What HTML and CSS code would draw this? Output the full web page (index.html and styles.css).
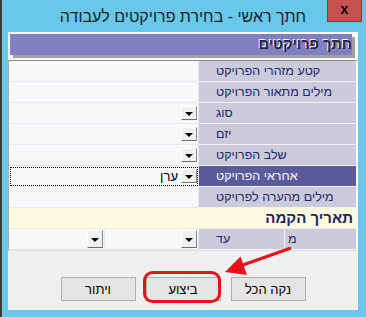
FILE: index.html
```html
<!DOCTYPE html>
<html lang="he">
<head>
    <meta charset="utf-8">
    <title>חתך ראשי - בחירת פרויקטים לעבודה</title>
    <link rel="stylesheet" href="styles.css">
</head>
<body>
    <div class="window">
        <div class="titlebar">
            <span></span>
            <span class="title">חתך ראשי - בחירת פרויקטים לעבודה</span>
            <span class="close-btn">x</span>
        </div>

        <div class="client">
            <div class="header-wrap">
                <div class="header-bar">חתך פרויקטים</div>
            </div>

            <div class="grid">
                <div class="value"></div>
                <div class="label">קטע מזהרי הפרויקט</div>

                <div class="value"></div>
                <div class="label">מילים מתאור הפרויקט</div>

                <div class="value"><span class="drop"></span></div>
                <div class="label">סוג</div>

                <div class="value"><span class="drop"></span></div>
                <div class="label">יזם</div>

                <div class="value"><span class="drop"></span></div>
                <div class="label">שלב הפרויקט</div>

                <div class="value focused"><span class="val-text">ערן</span><span class="drop"></span></div>
                <div class="label selected">אחראי הפרויקט</div>

                <div class="value"></div>
                <div class="label">מילים מהערה לפרויקט</div>

                <div class="section">תאריך הקמה</div>

                <div class="value date"><span class="drop tall"></span></div>
                <div class="value date"><span class="drop tall"></span></div>
                <div class="label date">עד</div>
                <div class="label date from">מ</div>
            </div>

            <div class="buttons">
                <button>ויתור</button>
                <button>ביצוע</button>
                <button>נקה הכל</button>
            </div>
        </div>

        <!-- red annotation drawn over the dialog -->
        <svg class="annotation" width="366" height="317" viewBox="0 0 366 317">
            <rect x="144.5" y="272.5" width="75" height="29" rx="8" fill="none" stroke="#e8121b" stroke-width="3"/>
            <line x1="291" y1="248" x2="240" y2="266" stroke="#e8121b" stroke-width="3"/>
            <polygon points="225,272 240.5,256.5 247,275" fill="#e8121b"/>
        </svg>
    </div>
</body>
</html>
```

FILE: styles.css
```css
body {
    margin: 0;
    font-family: "Liberation Sans", "DejaVu Sans", sans-serif;
}

.window {
    position: relative;
    width: 366px;
    height: 317px;
    background-color: #67c8e9;
    box-shadow: inset 2px 0 0 #3b3b3b;
    overflow: hidden;
}

.titlebar {
    display: grid;
    grid-template-columns: 1fr auto 1fr;
    height: 32px;
}

.title {
    align-self: center;
    padding-top: 1px;
    font-size: 16px;
    color: #1c2228;
    white-space: nowrap;
}

.close-btn {
    justify-self: end;
    box-sizing: border-box;
    width: 35px;
    height: 22px;
    margin-right: 4px;
    background-color: #c75050;
    border: 1px solid #8f3535;
    border-top: none;
    text-align: center;
    font-weight: bold;
    font-size: 14px;
    line-height: 19px;
    color: #000;
}

.client {
    box-sizing: border-box;
    height: 278px;
    margin: 0 8px 0 8px;
    background-color: #f0f0f0;
}

.header-wrap {
    padding: 2px 6px 5px 2px;
    background-color: #f8f8f8;
}

.header-bar {
    height: 21px;
    background-color: #8080c0;
    box-shadow: 3px 3px 0 #a0a0a0;
    text-align: right;
    font-weight: bold;
    font-size: 14.5px;
    line-height: 21px;
    color: #24243e;
    text-shadow: -1px -1px 0 #f4f4ff;
}

.grid {
    display: grid;
    grid-template-columns: 96px 94px 86px 71px;
    grid-auto-rows: 21px;
    border-top: 1px solid #8c8c8c;
    border-left: 1px solid #a8a8a8;
    border-right: 2px solid #fafafa;
    border-bottom: 1px solid #dedede;
    font-size: 12.5px;
}

.value,
.label {
    grid-column: span 2;
    box-sizing: border-box;
}

.value.date,
.label.date {
    grid-column: span 1;
}

.value {
    display: flex;
    align-items: center;
    justify-content: flex-end;
    padding-right: 1px;
    background-color: #f8f8fa;
    border-right: 1px solid #e8e8ec;
    border-bottom: 1px solid #eaeaee;
}

.value.focused {
    outline: 1px dotted #000;
    outline-offset: -2px;
}

.val-text {
    margin-right: 3px;
    font-size: 13px;
    color: #000;
}

.drop {
    display: flex;
    justify-content: center;
    align-items: center;
    box-sizing: border-box;
    width: 16px;
    height: 14px;
    background-color: #f0f0f0;
    border: 1px solid;
    border-color: #fdfdfd #8a8a8a #6e6e6e #fdfdfd;
}

.drop.tall {
    height: 18px;
}

.drop::after {
    content: "";
    margin-top: 2px;
    border-left: 4px solid transparent;
    border-right: 4px solid transparent;
    border-top: 4px solid #000;
}

.label {
    padding-left: 17px;
    background-color: #cbcbdb;
    border-bottom: 1px solid #f2f2f6;
    line-height: 20px;
    color: #24246c;
    white-space: nowrap;
}

.label.date {
    border-right: 1px solid #f2f2f6;
}

.label.from {
    padding-left: 3px;
    border-right: none;
}

.label.selected {
    background-color: #5b5b9b;
    color: #fafaff;
}

.section {
    grid-column: 1 / -1;
    box-sizing: border-box;
    padding-right: 3px;
    background-color: #fcfbe0;
    border-bottom: 1px solid #ececec;
    text-align: right;
    font-weight: bold;
    font-size: 15px;
    line-height: 20px;
    color: #24245e;
}

.buttons {
    display: flex;
    justify-content: center;
    gap: 10px;
    margin-top: 26px;
}

button {
    box-sizing: border-box;
    width: 75px;
    height: 24px;
    padding: 0;
    background-color: #e5e5e5;
    border: 1px solid #adadad;
    font-family: "Liberation Sans", "DejaVu Sans", sans-serif;
    font-size: 13px;
    color: #000;
}

.annotation {
    position: absolute;
    top: 0;
    left: 0;
    pointer-events: none;
}
```
